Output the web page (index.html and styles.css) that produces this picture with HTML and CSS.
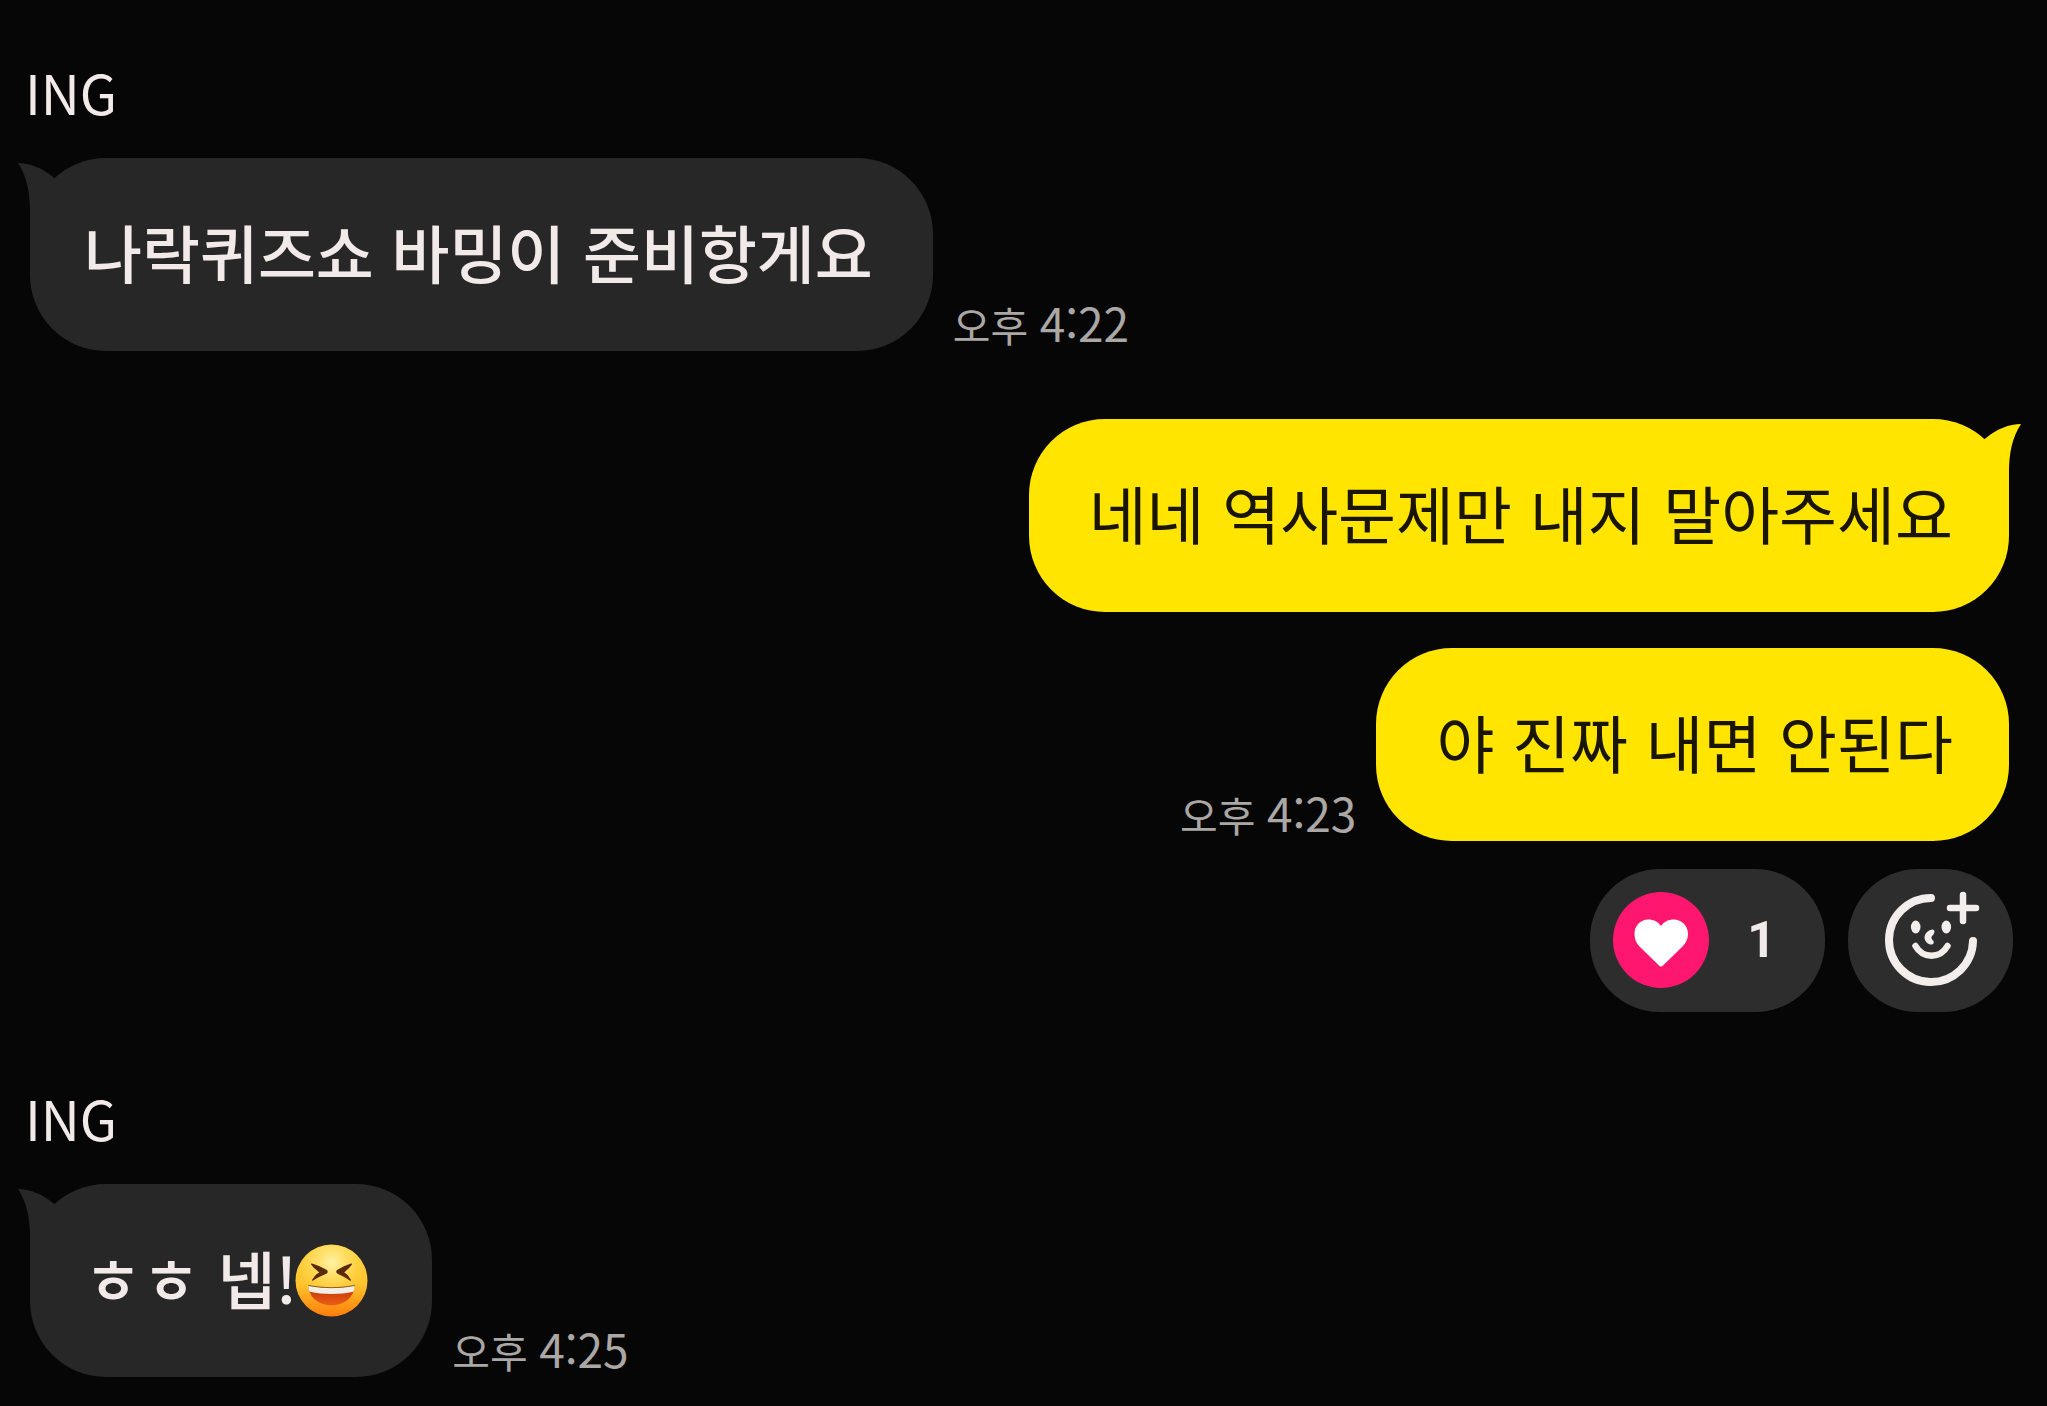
FILE: index.html
```html
<!DOCTYPE html>
<html lang="ko">
<head>
<meta charset="utf-8">
<meta name="viewport" content="width=device-width, initial-scale=1">
<title>ING</title>
<link rel="stylesheet" href="styles.css">
</head>
<body>
<svg class="defs" aria-hidden="true">
  <symbol id="tail" viewBox="-12 0 60 80">
    <path d="M-12 5C0 5 12 10 23 19L40 30L30 60L0 76L0 54C0 34-3 19-12 5Z"/>
  </symbol>
</svg>
<main class="chat">
  <section class="group received">
    <h2 class="name">ING</h2>
    <div class="row">
      <p class="bubble"><svg class="tail" aria-hidden="true"><use href="#tail"/></svg><span class="text">나락퀴즈쇼 바밍이 준비항게요</span></p>
      <time class="time" datetime="16:22">오후 <span class="clock">4:22</span></time>
    </div>
  </section>

  <section class="group sent">
    <div class="row">
      <p class="bubble"><svg class="tail" aria-hidden="true"><use href="#tail"/></svg><span class="text">네네 역사문제만 내지 말아주세요</span></p>
    </div>
    <div class="row">
      <time class="time" datetime="16:23">오후 <span class="clock">4:23</span></time>
      <p class="bubble"><span class="text">야 진짜 내면 안된다</span></p>
    </div>
    <div class="reactions">
      <button class="reaction" type="button" aria-label="하트 1">
        <svg class="heart" viewBox="0 0 96 96" aria-hidden="true">
          <circle cx="48" cy="48" r="48" fill="#ff176f"/>
          <path d="M48 34C51 29.500 56 27.500 60.500 27.500C69 27.500 75 34 75 42C75 47 73 51 69.500 54.500L50 73.500Q48 75.500 46 73.500L26.500 54.500C23 51 21.500 47 21.500 42C21.500 34 27 27.500 35.500 27.500C40 27.500 45 29.500 48 34Z" fill="#fff"/>
        </svg>
        <span class="count">1</span>
      </button>
      <button class="reaction add" type="button" aria-label="공감 추가">
        <svg class="smile" viewBox="-50 -50 100 100" aria-hidden="true">
          <g fill="none" stroke="#f3eeec" stroke-linecap="round">
            <path d="M0-42A42 42 0 1 0 42 1" stroke-width="8"/>
            <path d="M32-45V-19M19-32H45" stroke-width="6.500"/>
            <path d="M-15.500 6C-8 19 9 19 16.500 6" stroke-width="6.500"/>
          </g>
          <g fill="#f3eeec">
            <ellipse cx="-15.300" cy="-13" rx="4.800" ry="6.500"/>
            <ellipse cx="15.300" cy="-13" rx="4.800" ry="6.500"/>
            <path d="M1.500-10.500C-2-10-6.500-7-6.500-2.500C-6.500 2 -2 5 1 4.500C3 4 3.500 1.500 1.500 0C0-1.500 0-3.500 2-5C4-7 4-10.500 1.500-10.500Z"/>
          </g>
        </svg>
      </button>
    </div>
  </section>

  <section class="group received">
    <h2 class="name">ING</h2>
    <div class="row">
      <p class="bubble"><svg class="tail" aria-hidden="true"><use href="#tail"/></svg><span class="text">ㅎㅎ 넵!</span><svg class="emoji" viewBox="0 0 74 74" role="img" aria-label="😆">
          <defs>
            <linearGradient id="face" x1="0" y1="0" x2="0" y2="1">
              <stop offset="0" stop-color="#ffcf3d"/>
              <stop offset=".55" stop-color="#ffc42c"/>
              <stop offset="1" stop-color="#ff7d0c"/>
            </linearGradient>
            <radialGradient id="shine" cx=".5" cy=".25" r=".5">
              <stop offset="0" stop-color="#fff3a8"/>
              <stop offset="1" stop-color="#ffe25a" stop-opacity="0"/>
            </radialGradient>
            <linearGradient id="mouth" x1="0" y1="0" x2="0" y2="1">
              <stop offset="0" stop-color="#b93208"/>
              <stop offset="1" stop-color="#ee5c16"/>
            </linearGradient>
          </defs>
          <circle cx="37" cy="37" r="36.500" fill="url(#face)"/>
          <circle cx="37" cy="37" r="36" fill="url(#shine)"/>
          <path d="M13.500 42C29 45 45 45 60.500 42C60 54 50 62 37 62S14 54 13.500 42Z" fill="url(#mouth)"/>
          <path d="M13.500 42C29 45 45 45 60.500 42C60.500 45 60 47 59 48.500C45 51.500 29 51.500 15 48.500C14 47 13.500 45 13.500 42Z" fill="#f3efe6"/>
          <path d="M13.500 42C29 45 45 45 60.500 42" fill="none" stroke="#8a5a17" stroke-width="1"/>
          <path d="M17 20.500C22 22 28 24.500 32 27Q33 28.500 31.500 29.500C27 31.500 22 33.500 18 36.500C20 33 22.500 30.500 26 28.500C22.500 26.500 19 24 17 20.500ZM57 20.500C52 22 47 24.500 43 27Q42 28.500 43.500 29.500C48 31.500 52 33.500 56 36.500C54 33 52 30.500 48.500 28.500C52 26.500 55 24 57 20.500Z" fill="#5b2a0a" stroke="#5b2a0a" stroke-width="1.500" stroke-linejoin="round"/>
        </svg></p>
      <time class="time" datetime="16:25">오후 <span class="clock">4:25</span></time>
    </div>
  </section>
</main>
</body>
</html>
```
FILE: styles.css
```css
* {
  box-sizing: border-box;
  margin: 0;
}

body {
  background: #060606;
  color: #f1eae8;
  font-family: "Noto Sans CJK KR", sans-serif;
}

.defs {
  position: absolute;
  width: 0;
  height: 0;
}

.chat {
  display: flex;
  flex-direction: column;
  gap: 68px;
  padding: 60px 38px 28px 30px;
}

.group {
  display: flex;
  flex-direction: column;
}

.sent {
  align-items: flex-end;
  gap: 36px;
  margin-bottom: 6px;
}

.received {
  gap: 34px;
}

.name {
  margin-left: -5px;
  font-size: 54px;
  font-weight: 400;
  line-height: 64px;
}

.row {
  display: flex;
  align-items: flex-end;
  gap: 20px;
}

.bubble {
  position: relative;
  display: flex;
  align-items: center;
  padding: 60px;
  border-radius: 76px;
  font-size: 63px;
}

.text {
  margin-bottom: 8px;
  line-height: 65px;
}

.received .bubble {
  padding-left: 54px;
  background: #272727;
  font-weight: 500;
}

.sent .bubble {
  padding-right: 56px;
  background: #ffe500;
  color: #1a1500;
}

/* The tail grows out of the bubble's upper outer corner. */
.tail {
  position: absolute;
  top: 0;
  left: -12px;
  width: 60px;
  height: 80px;
  fill: #272727;
}

.sent .tail {
  right: -12px;
  left: auto;
  fill: #ffe500;
  transform: scaleX(-1);
}

.time {
  color: #aaa7a5;
  font-size: 41px;
  font-weight: 400;
  line-height: 54px;
}

.clock {
  font-size: 46px;
}

.emoji {
  width: 73px;
  height: 73px;
  margin-right: 4px;
  margin-left: -2px;
}

.reactions {
  display: flex;
  gap: 23px;
  margin-top: -8px;
  margin-right: -4px;
}

.reaction {
  display: flex;
  align-items: center;
  gap: 38px;
  padding: 23px 49px 24px 23px;
  border: 0;
  border-radius: 70px;
  background: #2d2d2d;
  color: #f1eae8;
}

.add {
  padding: 21px 32px 22px 33px;
}

.heart {
  width: 96px;
  height: 96px;
}

.smile {
  width: 100px;
  height: 100px;
}

.count {
  font-family: Roboto, sans-serif;
  font-size: 50px;
  font-weight: 700;
  line-height: 60px;
}
```
